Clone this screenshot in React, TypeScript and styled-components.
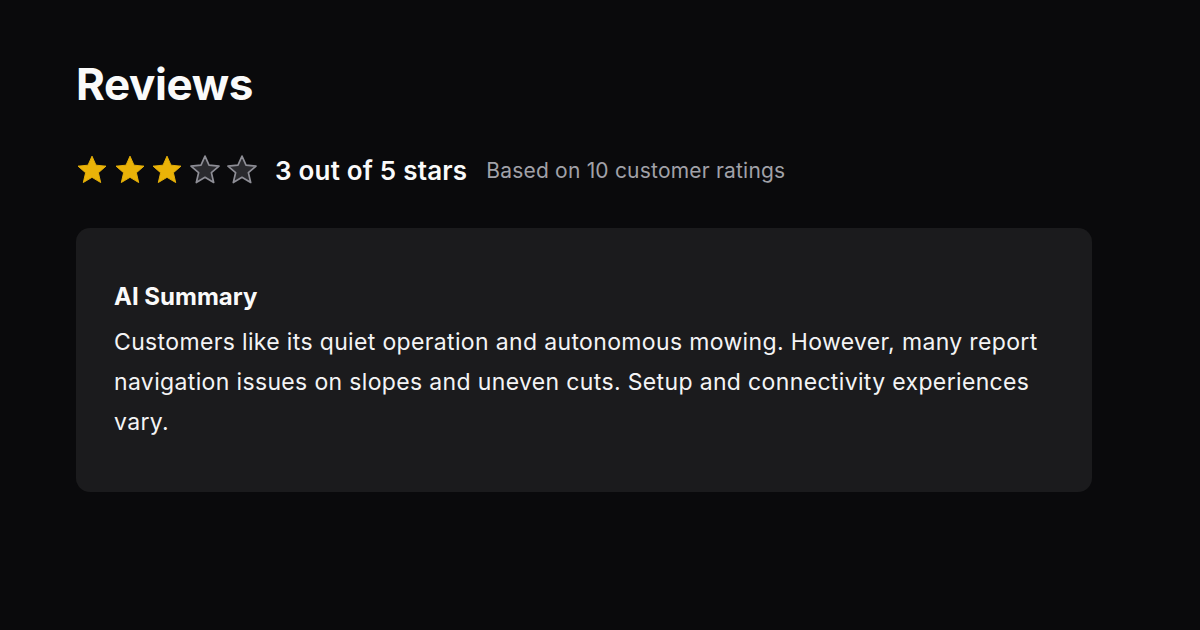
import { createGlobalStyle } from 'styled-components';
import styled from 'styled-components';

const GlobalStyle = createGlobalStyle`
  html, body {
    margin: 0;
    padding: 0;
    background: #0a0a0c;
  }
  body {
    font-family: Inter, 'Noto Sans', 'Liberation Sans', sans-serif;
    color: #fafafa;
    -webkit-font-smoothing: antialiased;
  }
`;

const Page = styled.main`
  width: 1200px;
  height: 630px;
  box-sizing: border-box;
  padding: 56px 108px 0 76px;
`;

const Title = styled.h1`
  margin: 0;
  font-size: 44px;
  line-height: 56px;
  font-weight: 700;
  letter-spacing: -0.4px;
  color: #fafafa;
`;

const RatingRow = styled.div`
  display: flex;
  align-items: center;
  margin-top: 38px;
  height: 40px;
`;

const Stars = styled.div`
  display: flex;
  align-items: center;
  gap: 5.5px;
  margin-right: 17px;
`;

const RatingLabel = styled.span`
  font-size: 26px;
  font-weight: 600;
  letter-spacing: 0.2px;
  color: #fafafa;
  margin-right: 19px;
`;

const RatingNote = styled.span`
  font-size: 21px;
  font-weight: 400;
  letter-spacing: 0.2px;
  color: #a1a1a8;
`;

const SummaryCard = styled.section`
  margin-top: 38px;
  background: #1b1b1d;
  border-radius: 14px;
  padding: 54px 38px 50px;
`;

const SummaryTitle = styled.h2`
  margin: 0;
  font-size: 24px;
  line-height: 30px;
  font-weight: 700;
  color: #fafafa;
`;

const SummaryText = styled.p`
  margin: 10px 0 0;
  font-size: 23px;
  line-height: 40px;
  font-weight: 400;
  letter-spacing: 0.35px;
  color: #f4f4f5;
`;

function Star({ filled }: { filled: boolean }) {
  return (
    <svg width="32" height="32" viewBox="0 0 24 24">
      <path
        d="M12 1.6L15 8.4l7.5.7-5.7 4.95 1.72 7.35L12 17.5l-6.52 3.9L7.2 14.05 1.5 9.1l7.5-.7z"
        fill={filled ? '#eab308' : '#2a2a2e'}
        stroke={filled ? '#eab308' : '#8e8e96'}
        strokeWidth={filled ? 0.7 : 1.25}
        strokeLinejoin="round"
      />
    </svg>
  );
}

export default function App() {
  const rating = 3;
  return (
    <>
      <GlobalStyle />
      <Page>
        <Title>Reviews</Title>
        <RatingRow>
          <Stars>
            {[1, 2, 3, 4, 5].map((n) => (
              <Star key={n} filled={n <= rating} />
            ))}
          </Stars>
          <RatingLabel>{rating} out of 5 stars</RatingLabel>
          <RatingNote>Based on 10 customer ratings</RatingNote>
        </RatingRow>
        <SummaryCard>
          <SummaryTitle>AI Summary</SummaryTitle>
          <SummaryText>
            Customers like its quiet operation and autonomous mowing. However, many report
            navigation issues on slopes and uneven cuts. Setup and connectivity experiences
            vary.
          </SummaryText>
        </SummaryCard>
      </Page>
    </>
  );
}
